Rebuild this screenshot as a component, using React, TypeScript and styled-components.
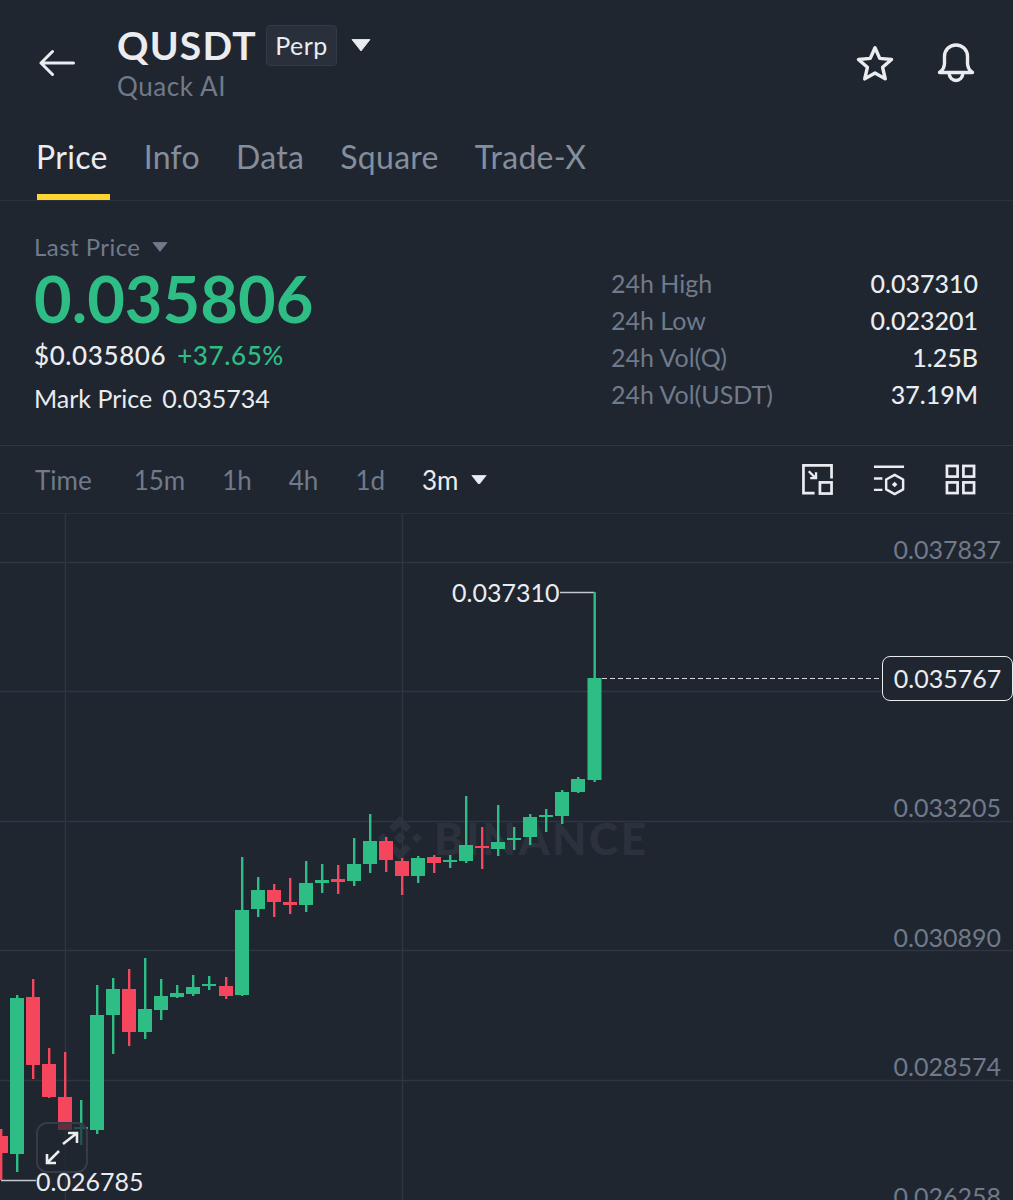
import styled, { createGlobalStyle } from "styled-components";

const GlobalStyle = createGlobalStyle`
  html, body { margin: 0; padding: 0; background: #1f2630; }
  * { box-sizing: border-box; }
`;

const UP = "#2ebd85";
const DOWN = "#f6465d";

type Candle = [x: number, open: number, close: number, high: number, low: number, up: boolean];

// x, body top, body bottom, wick top, wick bottom
const candles: Candle[] = [
  [1, 1136, 1153, 1129, 1180, false],
  [17, 998, 1154, 995, 1172, true],
  [33, 997, 1065, 979, 1079, false],
  [49, 1064, 1097, 1048, 1098, false],
  [65, 1097, 1130, 1052, 1130, false],
  [81, 1127, 1129, 1100, 1145, true],
  [97, 1015, 1130, 985, 1134, true],
  [113, 989, 1015, 978, 1054, true],
  [129, 989, 1032, 969, 1046, false],
  [145, 1009, 1032, 958, 1039, true],
  [161, 996, 1010, 979, 1020, true],
  [177, 993, 997, 985, 998, true],
  [193, 987, 994, 975, 996, true],
  [209, 984, 986, 976, 990, true],
  [226, 986, 996, 977, 999, false],
  [242, 910, 995, 857, 996, true],
  [258, 890, 909, 877, 917, true],
  [274, 890, 902, 884, 917, false],
  [290, 902, 905, 878, 914, false],
  [306, 883, 905, 861, 912, true],
  [322, 880, 883, 864, 893, true],
  [338, 879, 882, 865, 894, false],
  [354, 864, 881, 838, 886, true],
  [370, 841, 864, 814, 873, true],
  [386, 841, 860, 837, 872, false],
  [402, 861, 876, 858, 895, false],
  [418, 858, 876, 856, 883, true],
  [434, 857, 863, 855, 873, false],
  [450, 860, 862, 855, 868, true],
  [466, 845, 861, 796, 863, true],
  [482, 846, 848, 827, 869, false],
  [498, 842, 849, 805, 856, true],
  [514, 838, 840, 827, 850, true],
  [530, 817, 837, 814, 845, true],
  [546, 815, 817, 809, 832, true],
  [562, 792, 816, 790, 824, true],
  [578, 779, 792, 777, 793, true],
  [594.5, 678, 780, 592, 782, true],
];

const gridRows = [562, 691, 821, 950, 1080];
const gridCols = [65, 402];

const ticks = [
  { y: 549, label: "0.037837" },
  { y: 807, label: "0.033205" },
  { y: 937, label: "0.030890" },
  { y: 1066, label: "0.028574" },
  { y: 1196, label: "0.026258" },
];

const tabs = ["Price", "Info", "Data", "Square", "Trade-X"];
const stats = [
  ["24h High", "0.037310"],
  ["24h Low", "0.023201"],
  ["24h Vol(Q)", "1.25B"],
  ["24h Vol(USDT)", "37.19M"],
];
const intervals = ["15m", "1h", "4h", "1d"];

function BackIcon() {
  return (
    <svg width="36" height="28" viewBox="0 0 36 28" fill="none" stroke="#eaecef" strokeWidth="3" strokeLinecap="round" strokeLinejoin="round">
      <path d="M2 14H34.5M13.5 2.5L2 14L13.5 25.5" />
    </svg>
  );
}

function StarIcon() {
  return (
    <svg width="38" height="37" viewBox="0 0 40 38" fill="none" stroke="#eaecef" strokeWidth="3.6" strokeLinejoin="round">
      <path d="M20 2.5L25 13.6L37.4 14.8L28 23L30.8 35.2L20 28.9L9.2 35.2L12 23L2.6 14.8L15 13.6Z" />
    </svg>
  );
}

function BellIcon() {
  return (
    <svg width="38" height="40" viewBox="0 0 38 40" fill="none" stroke="#eaecef" strokeWidth="3.4" strokeLinejoin="round" strokeLinecap="round">
      <path d="M2.5 29.5C5.5 27.5 7.5 25 7.5 20V13.5C7.5 7 12.5 2 19 2C25.5 2 30.5 7 30.5 13.5V20C30.5 25 32.5 27.5 35.5 29.5Z" />
      <path d="M12 30C12.5 35 15.5 37.5 19 37.5C22.5 37.5 25.5 35 26 30" />
    </svg>
  );
}

function CaretIcon({ size, color }: { size: number; color: string }) {
  return (
    <svg width={size} height={size * 0.62} viewBox="0 0 16 10" fill={color}>
      <path d="M0.8 0.5H15.2L8 9.6Z" stroke={color} strokeWidth="0.8" strokeLinejoin="round" />
    </svg>
  );
}

function ResizeIcon() {
  return (
    <svg width="31" height="31" viewBox="0 0 32 32" fill="none" stroke="#eaecef" strokeWidth="2.8">
      <path d="M13 30H1.5V1.5H30.5V15" />
      <rect x="18.5" y="19" width="12" height="11.5" />
      <path d="M7 7.5L14 14.5M14.5 8.5V14.5H8.5" strokeWidth="2.4" />
    </svg>
  );
}

function IndicatorIcon() {
  return (
    <svg width="32" height="34" viewBox="0 0 34 34" fill="none" stroke="#eaecef" strokeWidth="2.6">
      <path d="M1 3H33M1 15.5H10M1 27.5H10" />
      <path d="M23 11.5L32 16.5V27L23 32L14 27V16.5Z" strokeLinejoin="round" />
      <path d="M23 18.8L26 21.8L23 24.8L20 21.8Z" fill="#eaecef" stroke="none" />
    </svg>
  );
}

function GridIcon() {
  return (
    <svg width="31" height="31" viewBox="0 0 32 32" fill="none" stroke="#eaecef" strokeWidth="2.8">
      <rect x="2" y="2" width="11" height="11" />
      <rect x="19" y="2" width="11" height="11" />
      <rect x="2" y="19" width="11" height="11" />
      <rect x="19" y="19" width="11" height="11" />
    </svg>
  );
}

function ExpandIcon() {
  return (
    <svg width="36" height="36" viewBox="0 0 36 36" fill="none" stroke="#eaecef" strokeWidth="2.6">
      <path d="M19 14L33 3M24 3H33V13" />
      <path d="M15 21L3 33M3 24V33H12" />
    </svg>
  );
}

function BinanceMark() {
  return (
    <svg width="44" height="44" viewBox="0 0 44 44" fill="#2c323d">
      <path d="M22 0L33 11L28 16L22 10L16 16L11 11Z" />
      <path d="M22 44L33 33L28 28L22 34L16 28L11 33Z" />
      <path d="M0 22L5 17L10 22L5 27Z" />
      <path d="M34 22L39 17L44 22L39 27Z" />
      <path d="M22 16L28 22L22 28L16 22Z" />
    </svg>
  );
}

function CandleChart() {
  return (
    <ChartSvg viewBox="0 514 1013 686">
      {gridRows.map((y) => (
        <line key={y} x1="0" x2="1013" y1={y + 0.5} y2={y + 0.5} stroke="#2f3640" strokeWidth="1.4" />
      ))}
      {gridCols.map((x) => (
        <line key={x} x1={x + 0.5} x2={x + 0.5} y1="514" y2="1200" stroke="#2f3640" strokeWidth="1.4" />
      ))}
      <line x1="602" x2="882" y1="678.5" y2="678.5" stroke="#d5d8dc" strokeWidth="1.2" strokeDasharray="5 3" />
      <path d="M560 592.5H594.5" stroke="#c4c7cb" strokeWidth="1.6" fill="none" />
      <path d="M1 1180.5H36" stroke="#c4c7cb" strokeWidth="1.6" fill="none" />
      {candles.map(([x, top, bottom, high, low, up]) => {
        const color = up ? UP : DOWN;
        return (
          <g key={x} fill={color}>
            <rect x={x - 1} y={high} width="2.4" height={low - high} />
            <rect x={x - 7} y={top} width="14" height={Math.max(bottom - top, 2)} />
          </g>
        );
      })}
    </ChartSvg>
  );
}

export default function App() {
  return (
    <>
      <GlobalStyle />
      <Page>
        <TopBar>
          <BackButton>
            <BackIcon />
          </BackButton>
          <TitleBlock>
            <TitleRow>
              <Symbol>QUSDT</Symbol>
              <ContractBadge>Perp</ContractBadge>
              <CaretIcon size={20} color="#eaecef" />
            </TitleRow>
            <CoinName>Quack AI</CoinName>
          </TitleBlock>
          <TopActions>
            <StarIcon />
            <BellIcon />
          </TopActions>
        </TopBar>

        <TabBar>
          {tabs.map((tab, i) => (
            <Tab key={tab} $active={i === 0}>
              {tab}
            </Tab>
          ))}
        </TabBar>

        <Summary>
          <PriceColumn>
            <LastPriceLabel>
              Last Price
              <CaretIcon size={16} color="#707a8a" />
            </LastPriceLabel>
            <BigPrice>0.035806</BigPrice>
            <FiatRow>
              <span>$0.035806</span>
              <Change>+37.65%</Change>
            </FiatRow>
            <MarkRow>
              <span>Mark Price</span>
              <span>0.035734</span>
            </MarkRow>
          </PriceColumn>
          <StatsTable>
            {stats.map(([label, value]) => (
              <StatRow key={label}>
                <StatLabel>{label}</StatLabel>
                <StatValue>{value}</StatValue>
              </StatRow>
            ))}
          </StatsTable>
        </Summary>

        <Toolbar>
          <IntervalList>
            <Interval $first>Time</Interval>
            {intervals.map((item) => (
              <Interval key={item}>{item}</Interval>
            ))}
            <Interval $active>
              3m
              <CaretIcon size={16} color="#eaecef" />
            </Interval>
          </IntervalList>
          <ToolIcons>
            <ResizeIcon />
            <IndicatorIcon />
            <GridIcon />
          </ToolIcons>
        </Toolbar>

        <ChartArea>
          <Watermark>
            <BinanceMark />
            <WatermarkText>BINANCE</WatermarkText>
          </Watermark>
          <CandleChart />
          {ticks.map((tick) => (
            <PriceTick key={tick.label} $y={tick.y - 514}>
              {tick.label}
            </PriceTick>
          ))}
          <HighLabel>0.037310</HighLabel>
          <LowLabel>0.026785</LowLabel>
          <CurrentPrice>0.035767</CurrentPrice>
          <ExpandButton>
            <ExpandIcon />
          </ExpandButton>
        </ChartArea>
      </Page>
    </>
  );
}

const Page = styled.div`
  width: 1013px;
  height: 1200px;
  overflow: hidden;
  display: flex;
  flex-direction: column;
  background: #1f2630;
  color: #eaecef;
  font-family: Lato, "Open Sans", sans-serif;
`;

const TopBar = styled.header`
  height: 136px;
  padding: 20px 38px 0 39px;
  display: flex;
  align-items: flex-start;
`;

const BackButton = styled.div`
  width: 78px;
  padding-top: 29px;
`;

const TitleBlock = styled.div`
  display: flex;
  flex-direction: column;
`;

const TitleRow = styled.div`
  display: flex;
  align-items: center;
  height: 50px;
`;

const Symbol = styled.span`
  font-size: 39px;
  font-weight: 700;
  line-height: 50px;
  letter-spacing: 1.2px;
`;

const ContractBadge = styled.span`
  width: 71px;
  height: 41px;
  margin: 0 14px 0 9px;
  border: 1px solid #333a45;
  border-radius: 4px;
  background: #2a303b;
  font-size: 25px;
  line-height: 39px;
  letter-spacing: 0.4px;
  text-align: center;
`;

const CoinName = styled.span`
  font-size: 26px;
  line-height: 32px;
  letter-spacing: 0.6px;
  color: #707a8a;
`;

const TopActions = styled.div`
  margin-left: auto;
  display: flex;
  align-items: center;
  gap: 43px;
  padding-top: 23px;
`;

const TabBar = styled.nav`
  height: 65px;
  padding: 0 0 0 36px;
  display: flex;
  gap: 36px;
  border-bottom: 1px solid #2b323c;
`;

const Tab = styled.div<{ $active?: boolean }>`
  position: relative;
  height: 58px;
  font-size: 32px;
  line-height: 42px;
  letter-spacing: 0.3px;
  color: ${(p) => (p.$active ? "#eaecef" : "#848e9c")};

  &::after {
    content: "";
    display: ${(p) => (p.$active ? "block" : "none")};
    position: absolute;
    left: 1px;
    right: -2px;
    top: 58px;
    height: 6px;
    background: #fcd535;
  }
`;

const Summary = styled.section`
  height: 245px;
  padding: 31px 35px 0 34px;
  display: flex;
  justify-content: space-between;
  border-bottom: 1px solid #2f3640;
`;

const PriceColumn = styled.div`
  display: flex;
  flex-direction: column;
`;

const LastPriceLabel = styled.div`
  display: flex;
  align-items: center;
  gap: 11px;
  font-size: 24px;
  line-height: 30px;
  letter-spacing: 0.45px;
  color: #707a8a;
`;

const BigPrice = styled.div`
  margin-top: -2px;
  font-size: 65px;
  font-weight: 700;
  line-height: 76px;
  color: ${UP};
`;

const FiatRow = styled.div`
  display: flex;
  gap: 11px;
  margin-top: 3px;
  font-size: 26px;
  line-height: 32px;
  font-weight: 500;
  letter-spacing: 0.6px;
`;

const Change = styled.span`
  color: ${UP};
`;

const MarkRow = styled.div`
  display: flex;
  gap: 10px;
  margin-top: 11px;
  font-size: 25px;
  line-height: 32px;
`;

const StatsTable = styled.div`
  width: 367px;
  padding-top: 33px;
  display: flex;
  flex-direction: column;
`;

const StatRow = styled.div`
  display: flex;
  justify-content: space-between;
  font-size: 25px;
  line-height: 37px;
`;

const StatLabel = styled.span`
  color: #707a8a;
`;

const StatValue = styled.span`
  font-weight: 500;
`;

const Toolbar = styled.div`
  height: 68px;
  padding: 0 37px 0 35px;
  display: flex;
  align-items: center;
  justify-content: space-between;
  border-bottom: 1px solid #2b323c;
`;

const IntervalList = styled.div`
  display: flex;
  align-items: center;
  gap: 37px;
`;

const Interval = styled.span<{ $active?: boolean; $first?: boolean }>`
  display: flex;
  align-items: center;
  gap: 13px;
  margin-right: ${(p) => (p.$first ? "5px" : "0")};
  font-size: 26px;
  color: ${(p) => (p.$active ? "#eaecef" : "#707a8a")};
`;

const ToolIcons = styled.div`
  display: flex;
  align-items: center;
  gap: 40px;
`;

const ChartArea = styled.div`
  position: relative;
  flex: 1;
  overflow: hidden;
`;

const ChartSvg = styled.svg`
  position: absolute;
  inset: 0;
  width: 1013px;
  height: 686px;
`;

const Watermark = styled.div`
  position: absolute;
  left: 378px;
  top: 298px;
  display: flex;
  align-items: center;
  gap: 12px;
`;

const WatermarkText = styled.span`
  font-size: 44px;
  font-weight: 900;
  letter-spacing: 2.7px;
  color: #2c323d;
`;

const PriceTick = styled.span<{ $y: number }>`
  position: absolute;
  right: 12px;
  top: ${(p) => p.$y - 15}px;
  font-size: 25px;
  line-height: 30px;
  color: #707a8a;
`;

const HighLabel = styled.span`
  position: absolute;
  left: 452px;
  top: 63px;
  font-size: 25px;
  line-height: 30px;
`;

const LowLabel = styled.span`
  position: absolute;
  left: 36px;
  top: 652px;
  font-size: 25px;
  line-height: 30px;
`;

const CurrentPrice = styled.span`
  position: absolute;
  left: 882px;
  top: 142px;
  width: 131px;
  height: 45px;
  border: 1px solid #eaecef;
  border-radius: 8px;
  background: #1f2630;
  font-size: 25px;
  line-height: 43px;
  text-align: center;
`;

const ExpandButton = styled.div`
  position: absolute;
  left: 36px;
  top: 608px;
  width: 52px;
  height: 51px;
  border: 2px solid #363c47;
  border-radius: 11px;
  background: rgba(31, 38, 48, 0.7);
  display: flex;
  align-items: center;
  justify-content: center;
`;
